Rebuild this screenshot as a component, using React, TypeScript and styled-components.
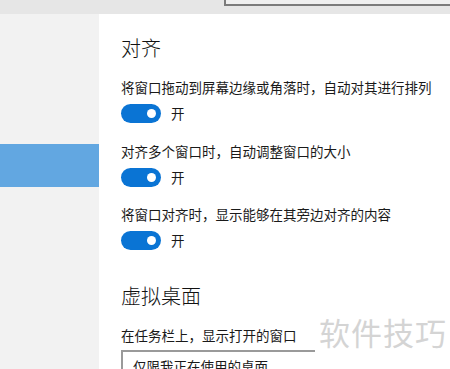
import React from 'react'
import styled, { createGlobalStyle } from 'styled-components'

const GlobalStyle = createGlobalStyle`
  html, body {
    margin: 0;
    padding: 0;
    width: 450px;
    height: 369px;
    overflow: hidden;
    background: #ffffff;
  }
  body {
    font-family: "Noto Sans CJK SC", "Noto Sans", sans-serif;
    color: #111111;
  }
`

const Page = styled.div`
  position: relative;
  width: 450px;
  height: 369px;
  display: flex;
  flex-direction: column;
  overflow: hidden;
`

const TopBar = styled.div`
  height: 14px;
  flex-shrink: 0;
  background: #e6e6e6;
`

const SearchBox = styled.div`
  margin-left: 224px;
  height: 4px;
  background: #efefef;
  border-left: 2px solid #7b7b7b;
  border-bottom: 2px solid #7b7b7b;
`

const Body = styled.div`
  flex: 1;
  display: flex;
`

const Sidebar = styled.div`
  width: 99px;
  flex-shrink: 0;
  background: #f2f2f2;
  padding-top: 130px;
`

const NavItem = styled.div<{ active?: boolean }>`
  height: 43px;
  background: ${p => (p.active ? '#62a7e1' : 'transparent')};
`

const Main = styled.div`
  flex: 1;
  padding: 20px 0 0 22px;
  display: flex;
  flex-direction: column;
`

const SectionTitle = styled.h2<{ gap?: number }>`
  margin: ${p => p.gap ?? 0}px 0 0;
  font-size: 20px;
  font-weight: 300;
  line-height: 28px;
  color: #111;
`

const Desc = styled.div<{ gap: number }>`
  margin-top: ${p => p.gap}px;
  font-size: 13.5px;
  line-height: 20px;
  color: #1a1a1a;
  white-space: nowrap;
`

const ToggleRow = styled.div`
  margin-top: 6px;
  height: 20px;
  display: flex;
  align-items: center;
  gap: 10px;
`

const Track = styled.div`
  width: 40px;
  height: 19px;
  border-radius: 10px;
  background: #0a74d4;
  position: relative;
`

const Thumb = styled.div`
  position: absolute;
  right: 5px;
  top: 5px;
  width: 9px;
  height: 9px;
  border-radius: 50%;
  background: #ffffff;
`

const ToggleLabel = styled.span`
  font-size: 13.5px;
  color: #1a1a1a;
`

const Select = styled.div`
  margin-top: 5px;
  width: 190px;
  height: 30px;
  border: 2px solid #9a9a9a;
  padding-left: 10px;
  font-size: 13.5px;
  line-height: 28px;
  color: #1a1a1a;
`

const Watermark = styled.div`
  position: absolute;
  left: 315px;
  top: 312px;
  right: 0;
  bottom: 0;
  padding-left: 4px;
  background: #ffffff;
  font-size: 31px;
  line-height: 40px;
  letter-spacing: 1px;
  color: #d4d4d4;
  pointer-events: none;
`

const Toggle: React.FC<{ label: string }> = ({ label }) => (
  <ToggleRow>
    <Track>
      <Thumb />
    </Track>
    <ToggleLabel>{label}</ToggleLabel>
  </ToggleRow>
)

const options = [
  { text: '将窗口拖动到屏幕边缘或角落时，自动对其进行排列', gap: 15 },
  { text: '对齐多个窗口时，自动调整窗口的大小', gap: 18 },
  { text: '将窗口对齐时，显示能够在其旁边对齐的内容', gap: 17 },
]

export default function App() {
  return (
    <Page>
      <GlobalStyle />
      <TopBar>
        <SearchBox />
      </TopBar>
      <Body>
        <Sidebar>
          <NavItem active />
        </Sidebar>
        <Main>
          <SectionTitle>对齐</SectionTitle>
          {options.map(o => (
            <React.Fragment key={o.text}>
              <Desc gap={o.gap}>{o.text}</Desc>
              <Toggle label="开" />
            </React.Fragment>
          ))}
          <SectionTitle gap={32}>虚拟桌面</SectionTitle>
          <Desc gap={15}>在任务栏上，显示打开的窗口</Desc>
          <Select>仅限我正在使用的桌面</Select>
        </Main>
      </Body>
      <Watermark>软件技巧</Watermark>
    </Page>
  )
}
